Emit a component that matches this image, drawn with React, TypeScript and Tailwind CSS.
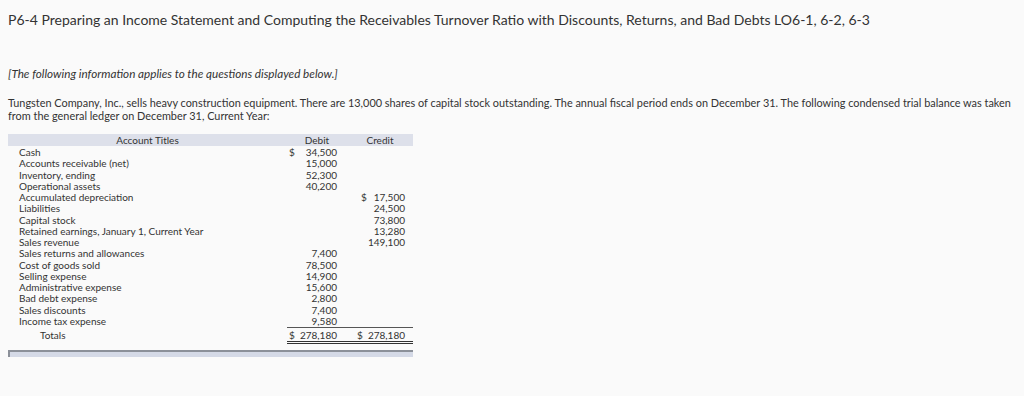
import React from 'react';

type Row = { label: string; debit?: string; credit?: string; dDollar?: boolean; cDollar?: boolean };

const rows: Row[] = [
  { label: 'Cash', debit: '34,500', dDollar: true },
  { label: 'Accounts receivable (net)', debit: '15,000' },
  { label: 'Inventory, ending', debit: '52,300' },
  { label: 'Operational assets', debit: '40,200' },
  { label: 'Accumulated depreciation', credit: '17,500', cDollar: true },
  { label: 'Liabilities', credit: '24,500' },
  { label: 'Capital stock', credit: '73,800' },
  { label: 'Retained earnings, January 1, Current Year', credit: '13,280' },
  { label: 'Sales revenue', credit: '149,100' },
  { label: 'Sales returns and allowances', debit: '7,400' },
  { label: 'Cost of goods sold', debit: '78,500' },
  { label: 'Selling expense', debit: '14,900' },
  { label: 'Administrative expense', debit: '15,600' },
  { label: 'Bad debt expense', debit: '2,800' },
  { label: 'Sales discounts', debit: '7,400' },
  { label: 'Income tax expense', debit: '9,580' },
];

const App: React.FC = () => {
  return (
    <div className="min-h-[396px] w-[1024px] bg-[#fafafa] text-[#333] font-['Lato','Open_Sans',sans-serif]">
      <div className="px-2 pt-[11px]">
        <h1 className="text-[14px] leading-[18px] text-[#333]">
          P6-4 Preparing an Income Statement and Computing the Receivables Turnover Ratio with Discounts, Returns, and Bad Debts LO6-1, 6-2, 6-3
        </h1>

        <p className="mt-[38px] text-[11.7px] leading-[13px] italic">
          [The following information applies to the questions displayed below.]
        </p>

        <p className="mt-[16px] text-[10.9px] leading-[13px]">
          Tungsten Company, Inc., sells heavy construction equipment. There are 13,000 shares of capital stock outstanding. The annual fiscal period ends on December 31. The following condensed trial balance was taken from the general ledger on December 31, Current Year:
        </p>

        <div className="mt-[12px] w-[405px] text-[10px]">
          <div className="grid grid-cols-[279px_60px_66px] bg-[#dde0ea] h-[12px] leading-[12px]">
            <div className="text-center">Account Titles</div>
            <div className="text-center">Debit</div>
            <div className="text-center">Credit</div>
          </div>

          <div className="pt-[1px]">
            {rows.map((r) => (
              <div key={r.label} className="grid grid-cols-[279px_60px_66px] h-[11.27px] leading-[11.27px]">
                <div className="pl-[11px]">{r.label}</div>
                <div className="flex justify-between pl-[2px] pr-[10px]">
                  <span>{r.dDollar ? '$' : ''}</span>
                  <span>{r.debit ?? ''}</span>
                </div>
                <div className="flex justify-between pl-[14px] pr-[8px]">
                  <span>{r.cDollar ? '$' : ''}</span>
                  <span>{r.credit ?? ''}</span>
                </div>
              </div>
            ))}
          </div>

          <div className="grid grid-cols-[279px_126px]">
            <div className="pl-[32px] pt-[2px] leading-[12px]">Totals</div>
            <div className="border-t border-[#555] border-b-[3px] border-b-[#333] border-double h-[17px]">
              <div className="grid grid-cols-[60px_66px] leading-[12px] pt-[1px]">
                <div className="flex justify-between pl-[2px] pr-[10px]">
                  <span>$</span>
                  <span>278,180</span>
                </div>
                <div className="flex justify-end gap-[5px] pr-[8px]">
                  <span>$</span>
                  <span>278,180</span>
                </div>
              </div>
            </div>
          </div>

          <div className="mt-[6px] h-[7px] bg-[#d4d9e6] border-t-2 border-l-2 border-[#8b9099]" />
        </div>
      </div>
    </div>
  );
};

export default App;
